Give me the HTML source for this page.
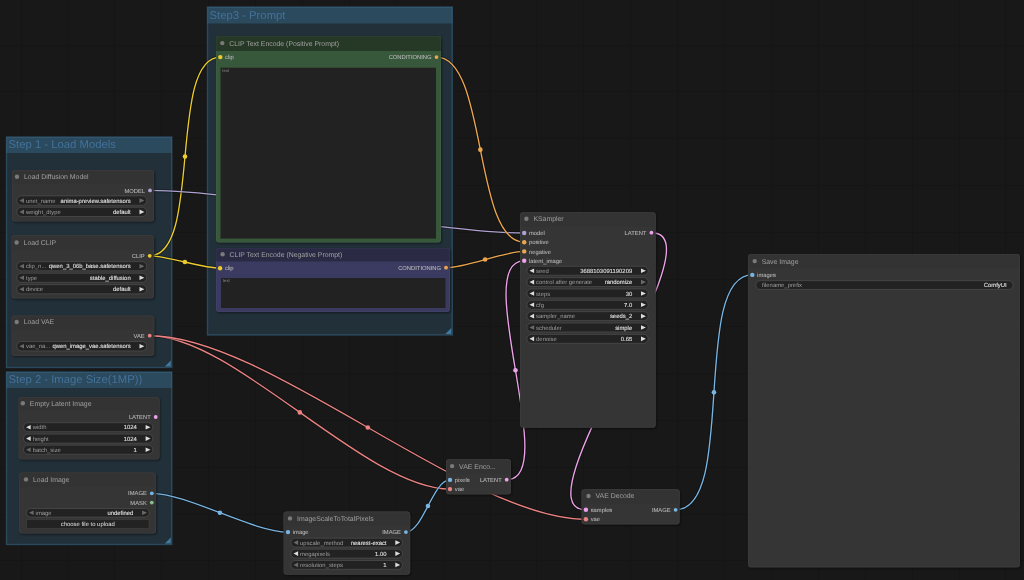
<!DOCTYPE html><html><head><meta charset="utf-8"><style>svg{will-change:transform;text-rendering:geometricPrecision}html,body{margin:0;padding:0;background:#181818;width:1024px;height:580px;overflow:hidden}</style></head><body><svg width="1024" height="580" viewBox="0 0 1024 580" style="display:block">
<defs><filter id="sh" x="-5%" y="-5%" width="110%" height="110%"><feDropShadow dx="1" dy="1.2" stdDeviation="1" flood-color="#000" flood-opacity="0.45"/></filter></defs>
<rect width="1024" height="580" fill="#181818"/>
<path d="M21.0 0V580 M67.9 0V580 M114.8 0V580 M161.7 0V580 M208.6 0V580 M255.5 0V580 M302.4 0V580 M349.3 0V580 M396.2 0V580 M443.1 0V580 M490.0 0V580 M536.9 0V580 M583.8 0V580 M630.7 0V580 M677.6 0V580 M724.5 0V580 M771.4 0V580 M818.3 0V580 M865.2 0V580 M912.1 0V580 M959.0 0V580 M1005.9 0V580 M0 45.0H1024 M0 91.9H1024 M0 138.8H1024 M0 185.7H1024 M0 232.6H1024 M0 279.5H1024 M0 326.4H1024 M0 373.3H1024 M0 420.2H1024 M0 467.1H1024 M0 514.0H1024 M0 560.9H1024" stroke="rgba(0,0,0,0.12)" stroke-width="1" fill="none" shape-rendering="crispEdges"/>
<rect x="207.5" y="7" width="244.8" height="328" fill="#22303a"/>
<rect x="207.5" y="7" width="244.8" height="16.5" fill="#2b4a5d"/>
<rect x="207.5" y="7" width="244.8" height="328" fill="none" stroke="#3f789e" stroke-opacity="0.45" stroke-width="1.4"/>
<text x="209.5" y="18.65" font-size="11.3" fill="#44719a" font-family="Liberation Sans, sans-serif">Step3 - Prompt</text>
<path d="M451.3 328 L451.3 334 L445.3 334 Z" fill="#3f789e"/>
<rect x="6.5" y="137" width="165.3" height="230.5" fill="#22303a"/>
<rect x="6.5" y="137" width="165.3" height="16" fill="#2b4a5d"/>
<rect x="6.5" y="137" width="165.3" height="230.5" fill="none" stroke="#3f789e" stroke-opacity="0.45" stroke-width="1.4"/>
<text x="8.5" y="148.4" font-size="11.3" fill="#44719a" font-family="Liberation Sans, sans-serif">Step 1 - Load Models</text>
<path d="M170.8 360.5 L170.8 366.5 L164.8 366.5 Z" fill="#3f789e"/>
<rect x="6.5" y="372" width="165.3" height="172.5" fill="#22303a"/>
<rect x="6.5" y="372" width="165.3" height="16" fill="#2b4a5d"/>
<rect x="6.5" y="372" width="165.3" height="172.5" fill="none" stroke="#3f789e" stroke-opacity="0.45" stroke-width="1.4"/>
<text x="8.5" y="383.4" font-size="11.3" fill="#44719a" font-family="Liberation Sans, sans-serif">Step 2 - Image Size(1MP))</text>
<path d="M170.8 537.5 L170.8 543.5 L164.8 543.5 Z" fill="#3f789e"/>
<path d="M149.70 255.80 C202.42 255.80 167.58 57.10 220.30 57.10" fill="none" stroke="rgba(0,0,0,0.35)" stroke-width="3.0"/>
<path d="M149.70 255.80 C202.42 255.80 167.58 57.10 220.30 57.10" fill="none" stroke="#EBCC2C" stroke-width="1.35"/>
<circle cx="185.00" cy="156.45" r="2.3" fill="#EBCC2C"/>
<path d="M149.70 255.80 C167.57 255.80 202.23 268.20 220.10 268.20" fill="none" stroke="rgba(0,0,0,0.35)" stroke-width="3.0"/>
<path d="M149.70 255.80 C167.57 255.80 202.23 268.20 220.10 268.20" fill="none" stroke="#EBCC2C" stroke-width="1.35"/>
<circle cx="184.90" cy="262.00" r="2.3" fill="#EBCC2C"/>
<path d="M150.00 190.40 C244.15 190.40 430.05 233.00 524.20 233.00" fill="none" stroke="rgba(0,0,0,0.35)" stroke-width="3.0"/>
<path d="M150.00 190.40 C244.15 190.40 430.05 233.00 524.20 233.00" fill="none" stroke="#AFA2D0" stroke-width="1.35"/>
<circle cx="337.10" cy="211.70" r="2.3" fill="#AFA2D0"/>
<path d="M436.50 57.10 C487.71 57.10 472.99 242.20 524.20 242.20" fill="none" stroke="rgba(0,0,0,0.35)" stroke-width="3.0"/>
<path d="M436.50 57.10 C487.71 57.10 472.99 242.20 524.20 242.20" fill="none" stroke="#EDA64E" stroke-width="1.35"/>
<circle cx="480.35" cy="149.65" r="2.3" fill="#EDA64E"/>
<path d="M446.00 267.70 C465.97 267.70 504.23 251.40 524.20 251.40" fill="none" stroke="rgba(0,0,0,0.35)" stroke-width="3.0"/>
<path d="M446.00 267.70 C465.97 267.70 504.23 251.40 524.20 251.40" fill="none" stroke="#EDA64E" stroke-width="1.35"/>
<circle cx="485.10" cy="259.55" r="2.3" fill="#EDA64E"/>
<path d="M506.70 479.70 C561.60 479.70 469.30 260.80 524.20 260.80" fill="none" stroke="rgba(0,0,0,0.35)" stroke-width="3.0"/>
<path d="M506.70 479.70 C561.60 479.70 469.30 260.80 524.20 260.80" fill="none" stroke="#EDA2EA" stroke-width="1.35"/>
<circle cx="515.45" cy="370.25" r="2.3" fill="#EDA2EA"/>
<path d="M651.40 232.70 C722.58 232.70 514.72 509.80 585.90 509.80" fill="none" stroke="rgba(0,0,0,0.35)" stroke-width="3.0"/>
<path d="M651.40 232.70 C722.58 232.70 514.72 509.80 585.90 509.80" fill="none" stroke="#EDA2EA" stroke-width="1.35"/>
<circle cx="618.65" cy="371.25" r="2.3" fill="#EDA2EA"/>
<path d="M149.70 335.70 C234.00 335.70 365.70 489.10 450.00 489.10" fill="none" stroke="rgba(0,0,0,0.35)" stroke-width="3.0"/>
<path d="M149.70 335.70 C234.00 335.70 365.70 489.10 450.00 489.10" fill="none" stroke="#EB8282" stroke-width="1.35"/>
<circle cx="299.85" cy="412.40" r="2.3" fill="#EB8282"/>
<path d="M149.70 335.70 C268.02 335.70 467.58 519.30 585.90 519.30" fill="none" stroke="rgba(0,0,0,0.35)" stroke-width="3.0"/>
<path d="M149.70 335.70 C268.02 335.70 467.58 519.30 585.90 519.30" fill="none" stroke="#EB8282" stroke-width="1.35"/>
<circle cx="367.80" cy="427.50" r="2.3" fill="#EB8282"/>
<path d="M151.80 493.30 C187.20 493.30 252.60 532.10 288.00 532.10" fill="none" stroke="rgba(0,0,0,0.35)" stroke-width="3.0"/>
<path d="M151.80 493.30 C187.20 493.30 252.60 532.10 288.00 532.10" fill="none" stroke="#77B4E2" stroke-width="1.35"/>
<circle cx="219.90" cy="512.70" r="2.3" fill="#77B4E2"/>
<path d="M405.90 532.10 C422.98 532.10 432.92 479.90 450.00 479.90" fill="none" stroke="rgba(0,0,0,0.35)" stroke-width="3.0"/>
<path d="M405.90 532.10 C422.98 532.10 432.92 479.90 450.00 479.90" fill="none" stroke="#77B4E2" stroke-width="1.35"/>
<circle cx="427.95" cy="506.00" r="2.3" fill="#77B4E2"/>
<path d="M675.60 509.80 C737.38 509.80 690.52 274.90 752.30 274.90" fill="none" stroke="rgba(0,0,0,0.35)" stroke-width="3.0"/>
<path d="M675.60 509.80 C737.38 509.80 690.52 274.90 752.30 274.90" fill="none" stroke="#77B4E2" stroke-width="1.35"/>
<circle cx="713.95" cy="392.35" r="2.3" fill="#77B4E2"/>
<rect x="12" y="170" width="142" height="51.5" rx="3.2" fill="#353535" filter="url(#sh)"/>
<path d="M12 184.0 L12 173.2 Q12 170 15.2 170 L150.8 170 Q154 170 154 173.2 L154 184.0 Z" fill="#333333"/>
<rect x="12.3" y="170.3" width="141.4" height="50.9" rx="3.2" fill="none" stroke="rgba(255,255,255,0.05)" stroke-width="0.7"/>
<circle cx="17" cy="176.8" r="2.2" fill="#7a7a7a"/>
<text x="24" y="179.20000000000002" font-size="6.9" fill="#a0a0a0" font-family="Liberation Sans, sans-serif">Load Diffusion Model</text>
<circle cx="150" cy="190.4" r="1.9" fill="#AFA2D0"/>
<text x="145" y="192.5" font-size="5.8" fill="#b6b6b6" stroke="#b6b6b6" stroke-width="0.08" text-anchor="end" font-family="Liberation Sans, sans-serif">MODEL</text>
<rect x="16.8" y="195.89999999999998" width="129.9" height="9.400000000000011" rx="4.7000000000000055" fill="#222222" stroke="#555555" stroke-width="0.6"/>
<path d="M19.4 200.6 L24 198.29999999999998 L24 202.9 Z" fill="#6a6a6a"/>
<path d="M144.4 200.6 L139.5 198.29999999999998 L139.5 202.9 Z" fill="#6a6a6a"/>
<text x="26" y="202.7" font-size="5.9" fill="#9e9e9e" font-family="Liberation Sans, sans-serif">unet_name</text>
<text x="130.70000000000002" y="202.7" font-size="5.9" fill="#e0e0e0" stroke="#e0e0e0" stroke-width="0.1" text-anchor="end" font-family="Liberation Sans, sans-serif">anima-preview.safetensors</text>
<rect x="16.8" y="207.29999999999998" width="129.9" height="9.199999999999994" rx="4.599999999999997" fill="#222222" stroke="#555555" stroke-width="0.6"/>
<path d="M19.4 211.89999999999998 L24 209.59999999999997 L24 214.2 Z" fill="#6a6a6a"/>
<path d="M144.4 211.89999999999998 L139.5 209.59999999999997 L139.5 214.2 Z" fill="#dddddd"/>
<text x="26" y="213.99999999999997" font-size="5.9" fill="#9e9e9e" font-family="Liberation Sans, sans-serif">weight_dtype</text>
<text x="130.70000000000002" y="213.99999999999997" font-size="5.9" fill="#e0e0e0" stroke="#e0e0e0" stroke-width="0.1" text-anchor="end" font-family="Liberation Sans, sans-serif">default</text>
<rect x="11.5" y="235.3" width="142.5" height="63.099999999999966" rx="3.2" fill="#353535" filter="url(#sh)"/>
<path d="M11.5 249.3 L11.5 238.5 Q11.5 235.3 14.7 235.3 L150.8 235.3 Q154 235.3 154 238.5 L154 249.3 Z" fill="#333333"/>
<rect x="11.8" y="235.60000000000002" width="141.9" height="62.499999999999964" rx="3.2" fill="none" stroke="rgba(255,255,255,0.05)" stroke-width="0.7"/>
<circle cx="16.6" cy="242.5" r="2.2" fill="#7a7a7a"/>
<text x="23.6" y="244.9" font-size="6.9" fill="#a0a0a0" font-family="Liberation Sans, sans-serif">Load CLIP</text>
<circle cx="149.7" cy="255.8" r="1.9" fill="#EBCC2C"/>
<text x="144.7" y="257.90000000000003" font-size="5.8" fill="#b6b6b6" stroke="#b6b6b6" stroke-width="0.08" text-anchor="end" font-family="Liberation Sans, sans-serif">CLIP</text>
<rect x="16.8" y="261.7" width="129.9" height="9.1" rx="4.55" fill="#222222" stroke="#555555" stroke-width="0.6"/>
<path d="M19.4 266.25 L24 263.95 L24 268.55 Z" fill="#6a6a6a"/>
<path d="M144.4 266.25 L139.5 263.95 L139.5 268.55 Z" fill="#6a6a6a"/>
<text x="26" y="268.35" font-size="5.9" fill="#9e9e9e" font-family="Liberation Sans, sans-serif">clip_n...</text>
<text x="130.70000000000002" y="268.35" font-size="5.9" fill="#e0e0e0" stroke="#e0e0e0" stroke-width="0.1" text-anchor="end" font-family="Liberation Sans, sans-serif">qwen_3_06b_base.safetensors</text>
<rect x="16.8" y="273.2" width="129.9" height="9.1" rx="4.55" fill="#222222" stroke="#555555" stroke-width="0.6"/>
<path d="M19.4 277.75 L24 275.45 L24 280.05 Z" fill="#6a6a6a"/>
<path d="M144.4 277.75 L139.5 275.45 L139.5 280.05 Z" fill="#dddddd"/>
<text x="26" y="279.85" font-size="5.9" fill="#9e9e9e" font-family="Liberation Sans, sans-serif">type</text>
<text x="130.70000000000002" y="279.85" font-size="5.9" fill="#e0e0e0" stroke="#e0e0e0" stroke-width="0.1" text-anchor="end" font-family="Liberation Sans, sans-serif">stable_diffusion</text>
<rect x="16.8" y="284.7" width="129.9" height="9.1" rx="4.55" fill="#222222" stroke="#555555" stroke-width="0.6"/>
<path d="M19.4 289.25 L24 286.95 L24 291.55 Z" fill="#6a6a6a"/>
<path d="M144.4 289.25 L139.5 286.95 L139.5 291.55 Z" fill="#dddddd"/>
<text x="26" y="291.35" font-size="5.9" fill="#9e9e9e" font-family="Liberation Sans, sans-serif">device</text>
<text x="130.70000000000002" y="291.35" font-size="5.9" fill="#e0e0e0" stroke="#e0e0e0" stroke-width="0.1" text-anchor="end" font-family="Liberation Sans, sans-serif">default</text>
<rect x="11.5" y="315.5" width="142.8" height="40.39999999999998" rx="3.2" fill="#353535" filter="url(#sh)"/>
<path d="M11.5 329.5 L11.5 318.7 Q11.5 315.5 14.7 315.5 L151.10000000000002 315.5 Q154.3 315.5 154.3 318.7 L154.3 329.5 Z" fill="#333333"/>
<rect x="11.8" y="315.8" width="142.20000000000002" height="39.799999999999976" rx="3.2" fill="none" stroke="rgba(255,255,255,0.05)" stroke-width="0.7"/>
<circle cx="16.7" cy="322" r="2.2" fill="#7a7a7a"/>
<text x="23.7" y="324.4" font-size="6.9" fill="#a0a0a0" font-family="Liberation Sans, sans-serif">Load VAE</text>
<circle cx="149.7" cy="335.7" r="1.9" fill="#EB8282"/>
<text x="144.7" y="337.8" font-size="5.8" fill="#b6b6b6" stroke="#b6b6b6" stroke-width="0.08" text-anchor="end" font-family="Liberation Sans, sans-serif">VAE</text>
<rect x="16.8" y="341.5" width="129.9" height="9.400000000000011" rx="4.7000000000000055" fill="#222222" stroke="#555555" stroke-width="0.6"/>
<path d="M19.4 346.20000000000005 L24 343.90000000000003 L24 348.50000000000006 Z" fill="#6a6a6a"/>
<path d="M144.4 346.20000000000005 L139.5 343.90000000000003 L139.5 348.50000000000006 Z" fill="#dddddd"/>
<text x="26" y="348.30000000000007" font-size="5.9" fill="#9e9e9e" font-family="Liberation Sans, sans-serif">vae_na...</text>
<text x="130.70000000000002" y="348.30000000000007" font-size="5.9" fill="#e0e0e0" stroke="#e0e0e0" stroke-width="0.1" text-anchor="end" font-family="Liberation Sans, sans-serif">qwen_image_vae.safetensors</text>
<rect x="18.5" y="397" width="141.1" height="62.5" rx="3.2" fill="#353535" filter="url(#sh)"/>
<path d="M18.5 411.0 L18.5 400.2 Q18.5 397 21.7 397 L156.4 397 Q159.6 397 159.6 400.2 L159.6 411.0 Z" fill="#333333"/>
<rect x="18.8" y="397.3" width="140.5" height="61.9" rx="3.2" fill="none" stroke="rgba(255,255,255,0.05)" stroke-width="0.7"/>
<circle cx="22.8" cy="403.3" r="2.2" fill="#7a7a7a"/>
<text x="29.8" y="405.7" font-size="6.9" fill="#a0a0a0" font-family="Liberation Sans, sans-serif">Empty Latent Image</text>
<circle cx="155.7" cy="417" r="1.9" fill="#EDA2EA"/>
<text x="150.7" y="419.1" font-size="5.8" fill="#b6b6b6" stroke="#b6b6b6" stroke-width="0.08" text-anchor="end" font-family="Liberation Sans, sans-serif">LATENT</text>
<rect x="23.5" y="422.7" width="129.3" height="8.999999999999977" rx="4.4999999999999885" fill="#222222" stroke="#555555" stroke-width="0.6"/>
<path d="M26.099999999999998 427.2 L30.7 424.9 L30.7 429.5 Z" fill="#dddddd"/>
<path d="M150.5 427.2 L145.6 424.9 L145.6 429.5 Z" fill="#dddddd"/>
<text x="32.7" y="429.3" font-size="5.9" fill="#9e9e9e" font-family="Liberation Sans, sans-serif">width</text>
<text x="136.8" y="429.3" font-size="5.9" fill="#e0e0e0" stroke="#e0e0e0" stroke-width="0.1" text-anchor="end" font-family="Liberation Sans, sans-serif">1024</text>
<rect x="23.5" y="434.09999999999997" width="129.3" height="9.000000000000034" rx="4.500000000000017" fill="#222222" stroke="#555555" stroke-width="0.6"/>
<path d="M26.099999999999998 438.6 L30.7 436.3 L30.7 440.90000000000003 Z" fill="#dddddd"/>
<path d="M150.5 438.6 L145.6 436.3 L145.6 440.90000000000003 Z" fill="#dddddd"/>
<text x="32.7" y="440.70000000000005" font-size="5.9" fill="#9e9e9e" font-family="Liberation Sans, sans-serif">height</text>
<text x="136.8" y="440.70000000000005" font-size="5.9" fill="#e0e0e0" stroke="#e0e0e0" stroke-width="0.1" text-anchor="end" font-family="Liberation Sans, sans-serif">1024</text>
<rect x="23.5" y="445.2" width="129.3" height="8.999999999999977" rx="4.4999999999999885" fill="#222222" stroke="#555555" stroke-width="0.6"/>
<path d="M26.099999999999998 449.7 L30.7 447.4 L30.7 452.0 Z" fill="#6a6a6a"/>
<path d="M150.5 449.7 L145.6 447.4 L145.6 452.0 Z" fill="#dddddd"/>
<text x="32.7" y="451.8" font-size="5.9" fill="#9e9e9e" font-family="Liberation Sans, sans-serif">batch_size</text>
<text x="136.8" y="451.8" font-size="5.9" fill="#e0e0e0" stroke="#e0e0e0" stroke-width="0.1" text-anchor="end" font-family="Liberation Sans, sans-serif">1</text>
<rect x="19" y="472.4" width="137" height="61.10000000000002" rx="3.2" fill="#353535" filter="url(#sh)"/>
<path d="M19 486.4 L19 475.59999999999997 Q19 472.4 22.2 472.4 L152.8 472.4 Q156 472.4 156 475.59999999999997 L156 486.4 Z" fill="#333333"/>
<rect x="19.3" y="472.7" width="136.4" height="60.50000000000002" rx="3.2" fill="none" stroke="rgba(255,255,255,0.05)" stroke-width="0.7"/>
<circle cx="26" cy="479.4" r="2.2" fill="#7a7a7a"/>
<text x="33" y="481.79999999999995" font-size="6.9" fill="#a0a0a0" font-family="Liberation Sans, sans-serif">Load Image</text>
<circle cx="151.8" cy="493.3" r="1.9" fill="#77B4E2"/>
<text x="146.8" y="495.40000000000003" font-size="5.8" fill="#b6b6b6" stroke="#b6b6b6" stroke-width="0.08" text-anchor="end" font-family="Liberation Sans, sans-serif">IMAGE</text>
<circle cx="151.8" cy="502.6" r="1.9" fill="#8DBE8E"/>
<text x="146.8" y="504.70000000000005" font-size="5.8" fill="#b6b6b6" stroke="#b6b6b6" stroke-width="0.08" text-anchor="end" font-family="Liberation Sans, sans-serif">MASK</text>
<rect x="26.400000000000002" y="508.5" width="122.9" height="8.599999999999943" rx="4.299999999999971" fill="#222222" stroke="#555555" stroke-width="0.6"/>
<path d="M29.0 512.8 L33.6 510.49999999999994 L33.6 515.0999999999999 Z" fill="#6a6a6a"/>
<path d="M147 512.8 L142.1 510.49999999999994 L142.1 515.0999999999999 Z" fill="#6a6a6a"/>
<text x="35.6" y="514.9" font-size="5.9" fill="#9e9e9e" font-family="Liberation Sans, sans-serif">image</text>
<text x="133.3" y="514.9" font-size="5.9" fill="#e0e0e0" stroke="#e0e0e0" stroke-width="0.1" text-anchor="end" font-family="Liberation Sans, sans-serif">undefined</text>
<rect x="26.6" y="519.8" width="122.4" height="8.4" fill="#222222" stroke="#444" stroke-width="0.5"/>
<text x="87.8" y="526.1" font-size="5.9" fill="#e0e0e0" text-anchor="middle" font-family="Liberation Sans, sans-serif">choose file to upload</text>
<rect x="216" y="36" width="225" height="206.5" rx="3.2" fill="#37583a" filter="url(#sh)"/>
<path d="M216 51 L216 39.2 Q216 36 219.2 36 L437.8 36 Q441 36 441 39.2 L441 51 Z" fill="#263826"/>
<rect x="216.3" y="36.3" width="224.4" height="205.9" rx="3.2" fill="none" stroke="rgba(255,255,255,0.05)" stroke-width="0.7"/>
<circle cx="222.3" cy="43.1" r="2.2" fill="#7a7a7a"/>
<text x="229.3" y="45.5" font-size="6.9" fill="#a0a0a0" font-family="Liberation Sans, sans-serif">CLIP Text Encode (Positive Prompt)</text>
<circle cx="220.3" cy="57.1" r="2.2" fill="#EBCC2C"/>
<text x="225.10000000000002" y="59.2" font-size="5.8" fill="#b6b6b6" stroke="#b6b6b6" stroke-width="0.08" font-family="Liberation Sans, sans-serif">clip</text>
<circle cx="436.5" cy="57.1" r="1.9" fill="#EDA64E"/>
<text x="431.5" y="59.2" font-size="5.8" fill="#b6b6b6" stroke="#b6b6b6" stroke-width="0.08" text-anchor="end" font-family="Liberation Sans, sans-serif">CONDITIONING</text>
<rect x="220.5" y="67.7" width="215.5" height="170.9" fill="#222222"/>
<text x="222.3" y="71.8" font-size="4.3" fill="#8a8a8a" font-family="Liberation Sans, sans-serif">text</text>
<rect x="216" y="248" width="234" height="64" rx="3.2" fill="#3b3a62" filter="url(#sh)"/>
<path d="M216 261.5 L216 251.2 Q216 248 219.2 248 L446.8 248 Q450 248 450 251.2 L450 261.5 Z" fill="#2a2a44"/>
<rect x="216.3" y="248.3" width="233.4" height="63.4" rx="3.2" fill="none" stroke="rgba(255,255,255,0.05)" stroke-width="0.7"/>
<circle cx="222.6" cy="254.2" r="2.2" fill="#7a7a7a"/>
<text x="229.6" y="256.59999999999997" font-size="6.9" fill="#a0a0a0" font-family="Liberation Sans, sans-serif">CLIP Text Encode (Negative Prompt)</text>
<circle cx="220.1" cy="268.2" r="2.2" fill="#EBCC2C"/>
<text x="224.9" y="270.3" font-size="5.8" fill="#b6b6b6" stroke="#b6b6b6" stroke-width="0.08" font-family="Liberation Sans, sans-serif">clip</text>
<circle cx="446" cy="267.7" r="1.9" fill="#EDA64E"/>
<text x="441" y="269.8" font-size="5.8" fill="#b6b6b6" stroke="#b6b6b6" stroke-width="0.08" text-anchor="end" font-family="Liberation Sans, sans-serif">CONDITIONING</text>
<rect x="221" y="278" width="224.5" height="30" fill="#222222"/>
<text x="222.8" y="282.3" font-size="4.3" fill="#8a8a8a" font-family="Liberation Sans, sans-serif">text</text>
<rect x="520" y="212.3" width="135.75" height="215.39999999999998" rx="3.2" fill="#353535" filter="url(#sh)"/>
<path d="M520 226.3 L520 215.5 Q520 212.3 523.2 212.3 L652.55 212.3 Q655.75 212.3 655.75 215.5 L655.75 226.3 Z" fill="#333333"/>
<rect x="520.3" y="212.60000000000002" width="135.15" height="214.79999999999998" rx="3.2" fill="none" stroke="rgba(255,255,255,0.05)" stroke-width="0.7"/>
<circle cx="526.4" cy="218.8" r="2.2" fill="#7a7a7a"/>
<text x="533.4" y="221.20000000000002" font-size="6.9" fill="#a0a0a0" font-family="Liberation Sans, sans-serif">KSampler</text>
<circle cx="524.2" cy="233" r="2.2" fill="#AFA2D0"/>
<text x="529.0" y="235.1" font-size="5.8" fill="#b6b6b6" stroke="#b6b6b6" stroke-width="0.08" font-family="Liberation Sans, sans-serif">model</text>
<circle cx="524.2" cy="242.2" r="2.2" fill="#EDA64E"/>
<text x="529.0" y="244.29999999999998" font-size="5.8" fill="#b6b6b6" stroke="#b6b6b6" stroke-width="0.08" font-family="Liberation Sans, sans-serif">positive</text>
<circle cx="524.2" cy="251.4" r="2.2" fill="#EDA64E"/>
<text x="529.0" y="253.5" font-size="5.8" fill="#b6b6b6" stroke="#b6b6b6" stroke-width="0.08" font-family="Liberation Sans, sans-serif">negative</text>
<circle cx="524.2" cy="260.8" r="2.2" fill="#EDA2EA"/>
<text x="529.0" y="262.90000000000003" font-size="5.8" fill="#b6b6b6" stroke="#b6b6b6" stroke-width="0.08" font-family="Liberation Sans, sans-serif">latent_image</text>
<circle cx="651.4" cy="232.7" r="1.9" fill="#EDA2EA"/>
<text x="646.4" y="234.79999999999998" font-size="5.8" fill="#b6b6b6" stroke="#b6b6b6" stroke-width="0.08" text-anchor="end" font-family="Liberation Sans, sans-serif">LATENT</text>
<rect x="526.9" y="266.3" width="121.29999999999995" height="8.900000000000011" rx="4.4500000000000055" fill="#222222" stroke="#555555" stroke-width="0.6"/>
<path d="M529.5 270.75 L534.1 268.45 L534.1 273.05 Z" fill="#dddddd"/>
<path d="M645.9 270.75 L641.0 268.45 L641.0 273.05 Z" fill="#dddddd"/>
<text x="536.1" y="272.85" font-size="5.9" fill="#9e9e9e" font-family="Liberation Sans, sans-serif">seed</text>
<text x="632.1999999999999" y="272.85" font-size="5.9" fill="#e0e0e0" stroke="#e0e0e0" stroke-width="0.1" text-anchor="end" font-family="Liberation Sans, sans-serif">3688103091190209</text>
<rect x="526.9" y="277.65000000000003" width="121.29999999999995" height="8.900000000000011" rx="4.4500000000000055" fill="#222222" stroke="#555555" stroke-width="0.6"/>
<path d="M529.5 282.1 L534.1 279.8 L534.1 284.40000000000003 Z" fill="#dddddd"/>
<path d="M645.9 282.1 L641.0 279.8 L641.0 284.40000000000003 Z" fill="#6a6a6a"/>
<text x="536.1" y="284.20000000000005" font-size="5.9" fill="#9e9e9e" font-family="Liberation Sans, sans-serif">control after generate</text>
<text x="632.1999999999999" y="284.20000000000005" font-size="5.9" fill="#e0e0e0" stroke="#e0e0e0" stroke-width="0.1" text-anchor="end" font-family="Liberation Sans, sans-serif">randomize</text>
<rect x="526.9" y="289.0" width="121.29999999999995" height="8.900000000000011" rx="4.4500000000000055" fill="#222222" stroke="#555555" stroke-width="0.6"/>
<path d="M529.5 293.45000000000005 L534.1 291.15000000000003 L534.1 295.75000000000006 Z" fill="#dddddd"/>
<path d="M645.9 293.45000000000005 L641.0 291.15000000000003 L641.0 295.75000000000006 Z" fill="#dddddd"/>
<text x="536.1" y="295.55000000000007" font-size="5.9" fill="#9e9e9e" font-family="Liberation Sans, sans-serif">steps</text>
<text x="632.1999999999999" y="295.55000000000007" font-size="5.9" fill="#e0e0e0" stroke="#e0e0e0" stroke-width="0.1" text-anchor="end" font-family="Liberation Sans, sans-serif">30</text>
<rect x="526.9" y="300.35" width="121.29999999999995" height="8.900000000000011" rx="4.4500000000000055" fill="#222222" stroke="#555555" stroke-width="0.6"/>
<path d="M529.5 304.80000000000007 L534.1 302.50000000000006 L534.1 307.1000000000001 Z" fill="#dddddd"/>
<path d="M645.9 304.80000000000007 L641.0 302.50000000000006 L641.0 307.1000000000001 Z" fill="#dddddd"/>
<text x="536.1" y="306.9000000000001" font-size="5.9" fill="#9e9e9e" font-family="Liberation Sans, sans-serif">cfg</text>
<text x="632.1999999999999" y="306.9000000000001" font-size="5.9" fill="#e0e0e0" stroke="#e0e0e0" stroke-width="0.1" text-anchor="end" font-family="Liberation Sans, sans-serif">7.0</text>
<rect x="526.9" y="311.7" width="121.29999999999995" height="8.900000000000011" rx="4.4500000000000055" fill="#222222" stroke="#555555" stroke-width="0.6"/>
<path d="M529.5 316.15 L534.1 313.84999999999997 L534.1 318.45 Z" fill="#dddddd"/>
<path d="M645.9 316.15 L641.0 313.84999999999997 L641.0 318.45 Z" fill="#dddddd"/>
<text x="536.1" y="318.25" font-size="5.9" fill="#9e9e9e" font-family="Liberation Sans, sans-serif">sampler_name</text>
<text x="632.1999999999999" y="318.25" font-size="5.9" fill="#e0e0e0" stroke="#e0e0e0" stroke-width="0.1" text-anchor="end" font-family="Liberation Sans, sans-serif">seeds_2</text>
<rect x="526.9" y="323.05" width="121.29999999999995" height="8.900000000000011" rx="4.4500000000000055" fill="#222222" stroke="#555555" stroke-width="0.6"/>
<path d="M529.5 327.5 L534.1 325.2 L534.1 329.8 Z" fill="#6a6a6a"/>
<path d="M645.9 327.5 L641.0 325.2 L641.0 329.8 Z" fill="#dddddd"/>
<text x="536.1" y="329.6" font-size="5.9" fill="#9e9e9e" font-family="Liberation Sans, sans-serif">scheduler</text>
<text x="632.1999999999999" y="329.6" font-size="5.9" fill="#e0e0e0" stroke="#e0e0e0" stroke-width="0.1" text-anchor="end" font-family="Liberation Sans, sans-serif">simple</text>
<rect x="526.9" y="334.40000000000003" width="121.29999999999995" height="8.900000000000011" rx="4.4500000000000055" fill="#222222" stroke="#555555" stroke-width="0.6"/>
<path d="M529.5 338.85 L534.1 336.55 L534.1 341.15000000000003 Z" fill="#dddddd"/>
<path d="M645.9 338.85 L641.0 336.55 L641.0 341.15000000000003 Z" fill="#dddddd"/>
<text x="536.1" y="340.95000000000005" font-size="5.9" fill="#9e9e9e" font-family="Liberation Sans, sans-serif">denoise</text>
<text x="632.1999999999999" y="340.95000000000005" font-size="5.9" fill="#e0e0e0" stroke="#e0e0e0" stroke-width="0.1" text-anchor="end" font-family="Liberation Sans, sans-serif">0.65</text>
<rect x="446" y="459.3" width="65" height="35.099999999999966" rx="3.2" fill="#353535" filter="url(#sh)"/>
<path d="M446 473.3 L446 462.5 Q446 459.3 449.2 459.3 L507.8 459.3 Q511 459.3 511 462.5 L511 473.3 Z" fill="#333333"/>
<rect x="446.3" y="459.6" width="64.4" height="34.499999999999964" rx="3.2" fill="none" stroke="rgba(255,255,255,0.05)" stroke-width="0.7"/>
<circle cx="452.1" cy="466.1" r="2.2" fill="#7a7a7a"/>
<text x="459.1" y="468.5" font-size="6.9" fill="#a0a0a0" font-family="Liberation Sans, sans-serif">VAE Enco...</text>
<circle cx="450" cy="479.9" r="2.2" fill="#77B4E2"/>
<text x="454.8" y="482.0" font-size="5.8" fill="#b6b6b6" stroke="#b6b6b6" stroke-width="0.08" font-family="Liberation Sans, sans-serif">pixels</text>
<circle cx="450" cy="489.1" r="2.2" fill="#EB8282"/>
<text x="454.8" y="491.20000000000005" font-size="5.8" fill="#b6b6b6" stroke="#b6b6b6" stroke-width="0.08" font-family="Liberation Sans, sans-serif">vae</text>
<circle cx="506.7" cy="479.7" r="1.9" fill="#EDA2EA"/>
<text x="501.7" y="481.8" font-size="5.8" fill="#b6b6b6" stroke="#b6b6b6" stroke-width="0.08" text-anchor="end" font-family="Liberation Sans, sans-serif">LATENT</text>
<rect x="283.5" y="511.6" width="126.69999999999999" height="63.19999999999993" rx="3.2" fill="#353535" filter="url(#sh)"/>
<path d="M283.5 525.6 L283.5 514.8000000000001 Q283.5 511.6 286.7 511.6 L407.0 511.6 Q410.2 511.6 410.2 514.8000000000001 L410.2 525.6 Z" fill="#333333"/>
<rect x="283.8" y="511.90000000000003" width="126.1" height="62.59999999999993" rx="3.2" fill="none" stroke="rgba(255,255,255,0.05)" stroke-width="0.7"/>
<circle cx="290" cy="518.4" r="2.2" fill="#7a7a7a"/>
<text x="297" y="520.8" font-size="6.9" fill="#a0a0a0" font-family="Liberation Sans, sans-serif">ImageScaleToTotalPixels</text>
<circle cx="288" cy="532.1" r="2.2" fill="#77B4E2"/>
<text x="292.8" y="534.2" font-size="5.8" fill="#b6b6b6" stroke="#b6b6b6" stroke-width="0.08" font-family="Liberation Sans, sans-serif">image</text>
<circle cx="405.9" cy="532.1" r="1.9" fill="#77B4E2"/>
<text x="400.9" y="534.2" font-size="5.8" fill="#b6b6b6" stroke="#b6b6b6" stroke-width="0.08" text-anchor="end" font-family="Liberation Sans, sans-serif">IMAGE</text>
<rect x="290.90000000000003" y="538.2" width="111.59999999999997" height="8.800000000000045" rx="4.400000000000023" fill="#222222" stroke="#555555" stroke-width="0.6"/>
<path d="M293.5 542.6 L298.1 540.3000000000001 L298.1 544.9 Z" fill="#6a6a6a"/>
<path d="M400.2 542.6 L395.3 540.3000000000001 L395.3 544.9 Z" fill="#dddddd"/>
<text x="300.1" y="544.7" font-size="5.9" fill="#9e9e9e" font-family="Liberation Sans, sans-serif">upscale_method</text>
<text x="386.5" y="544.7" font-size="5.9" fill="#e0e0e0" stroke="#e0e0e0" stroke-width="0.1" text-anchor="end" font-family="Liberation Sans, sans-serif">nearest-exact</text>
<rect x="290.90000000000003" y="549.2" width="111.59999999999997" height="8.800000000000045" rx="4.400000000000023" fill="#222222" stroke="#555555" stroke-width="0.6"/>
<path d="M293.5 553.6 L298.1 551.3000000000001 L298.1 555.9 Z" fill="#dddddd"/>
<path d="M400.2 553.6 L395.3 551.3000000000001 L395.3 555.9 Z" fill="#dddddd"/>
<text x="300.1" y="555.7" font-size="5.9" fill="#9e9e9e" font-family="Liberation Sans, sans-serif">megapixels</text>
<text x="386.5" y="555.7" font-size="5.9" fill="#e0e0e0" stroke="#e0e0e0" stroke-width="0.1" text-anchor="end" font-family="Liberation Sans, sans-serif">1.00</text>
<rect x="290.90000000000003" y="560.5" width="111.59999999999997" height="8.800000000000045" rx="4.400000000000023" fill="#222222" stroke="#555555" stroke-width="0.6"/>
<path d="M293.5 564.9 L298.1 562.6 L298.1 567.1999999999999 Z" fill="#6a6a6a"/>
<path d="M400.2 564.9 L395.3 562.6 L395.3 567.1999999999999 Z" fill="#dddddd"/>
<text x="300.1" y="567.0" font-size="5.9" fill="#9e9e9e" font-family="Liberation Sans, sans-serif">resolution_steps</text>
<text x="386.5" y="567.0" font-size="5.9" fill="#e0e0e0" stroke="#e0e0e0" stroke-width="0.1" text-anchor="end" font-family="Liberation Sans, sans-serif">1</text>
<rect x="581.5" y="489.2" width="98.20000000000005" height="35.19999999999999" rx="3.2" fill="#353535" filter="url(#sh)"/>
<path d="M581.5 503.2 L581.5 492.4 Q581.5 489.2 584.7 489.2 L676.5 489.2 Q679.7 489.2 679.7 492.4 L679.7 503.2 Z" fill="#333333"/>
<rect x="581.8" y="489.5" width="97.60000000000005" height="34.59999999999999" rx="3.2" fill="none" stroke="rgba(255,255,255,0.05)" stroke-width="0.7"/>
<circle cx="588.5" cy="496" r="2.2" fill="#7a7a7a"/>
<text x="595.5" y="498.4" font-size="6.9" fill="#a0a0a0" font-family="Liberation Sans, sans-serif">VAE Decode</text>
<circle cx="585.9" cy="509.8" r="2.2" fill="#EDA2EA"/>
<text x="590.6999999999999" y="511.90000000000003" font-size="5.8" fill="#b6b6b6" stroke="#b6b6b6" stroke-width="0.08" font-family="Liberation Sans, sans-serif">samples</text>
<circle cx="585.9" cy="519.3" r="2.2" fill="#EB8282"/>
<text x="590.6999999999999" y="521.4" font-size="5.8" fill="#b6b6b6" stroke="#b6b6b6" stroke-width="0.08" font-family="Liberation Sans, sans-serif">vae</text>
<circle cx="675.6" cy="509.8" r="1.9" fill="#77B4E2"/>
<text x="670.6" y="511.90000000000003" font-size="5.8" fill="#b6b6b6" stroke="#b6b6b6" stroke-width="0.08" text-anchor="end" font-family="Liberation Sans, sans-serif">IMAGE</text>
<rect x="748" y="254" width="272" height="313.4" rx="3.2" fill="#353535" filter="url(#sh)"/>
<path d="M748 268.0 L748 257.2 Q748 254 751.2 254 L1016.8 254 Q1020 254 1020 257.2 L1020 268.0 Z" fill="#333333"/>
<rect x="748.3" y="254.3" width="271.4" height="312.79999999999995" rx="3.2" fill="none" stroke="rgba(255,255,255,0.05)" stroke-width="0.7"/>
<circle cx="754.7" cy="261.1" r="2.2" fill="#7a7a7a"/>
<text x="761.7" y="263.5" font-size="6.9" fill="#a0a0a0" font-family="Liberation Sans, sans-serif">Save Image</text>
<circle cx="752.3" cy="274.9" r="2.2" fill="#77B4E2"/>
<text x="757.0999999999999" y="277.0" font-size="5.8" fill="#b6b6b6" stroke="#b6b6b6" stroke-width="0.08" font-family="Liberation Sans, sans-serif">images</text>
<rect x="755.9" y="280.7" width="257.1" height="8.700000000000022" rx="4.350000000000011" fill="#222222" stroke="#555555" stroke-width="0.6"/>
<text x="762.1" y="287.15000000000003" font-size="5.9" fill="#9e9e9e" font-family="Liberation Sans, sans-serif">filename_prefix</text>
<text x="1006.7" y="287.15000000000003" font-size="5.9" fill="#e0e0e0" stroke="#e0e0e0" stroke-width="0.1" text-anchor="end" font-family="Liberation Sans, sans-serif">ComfyUI</text>
</svg></body></html>
